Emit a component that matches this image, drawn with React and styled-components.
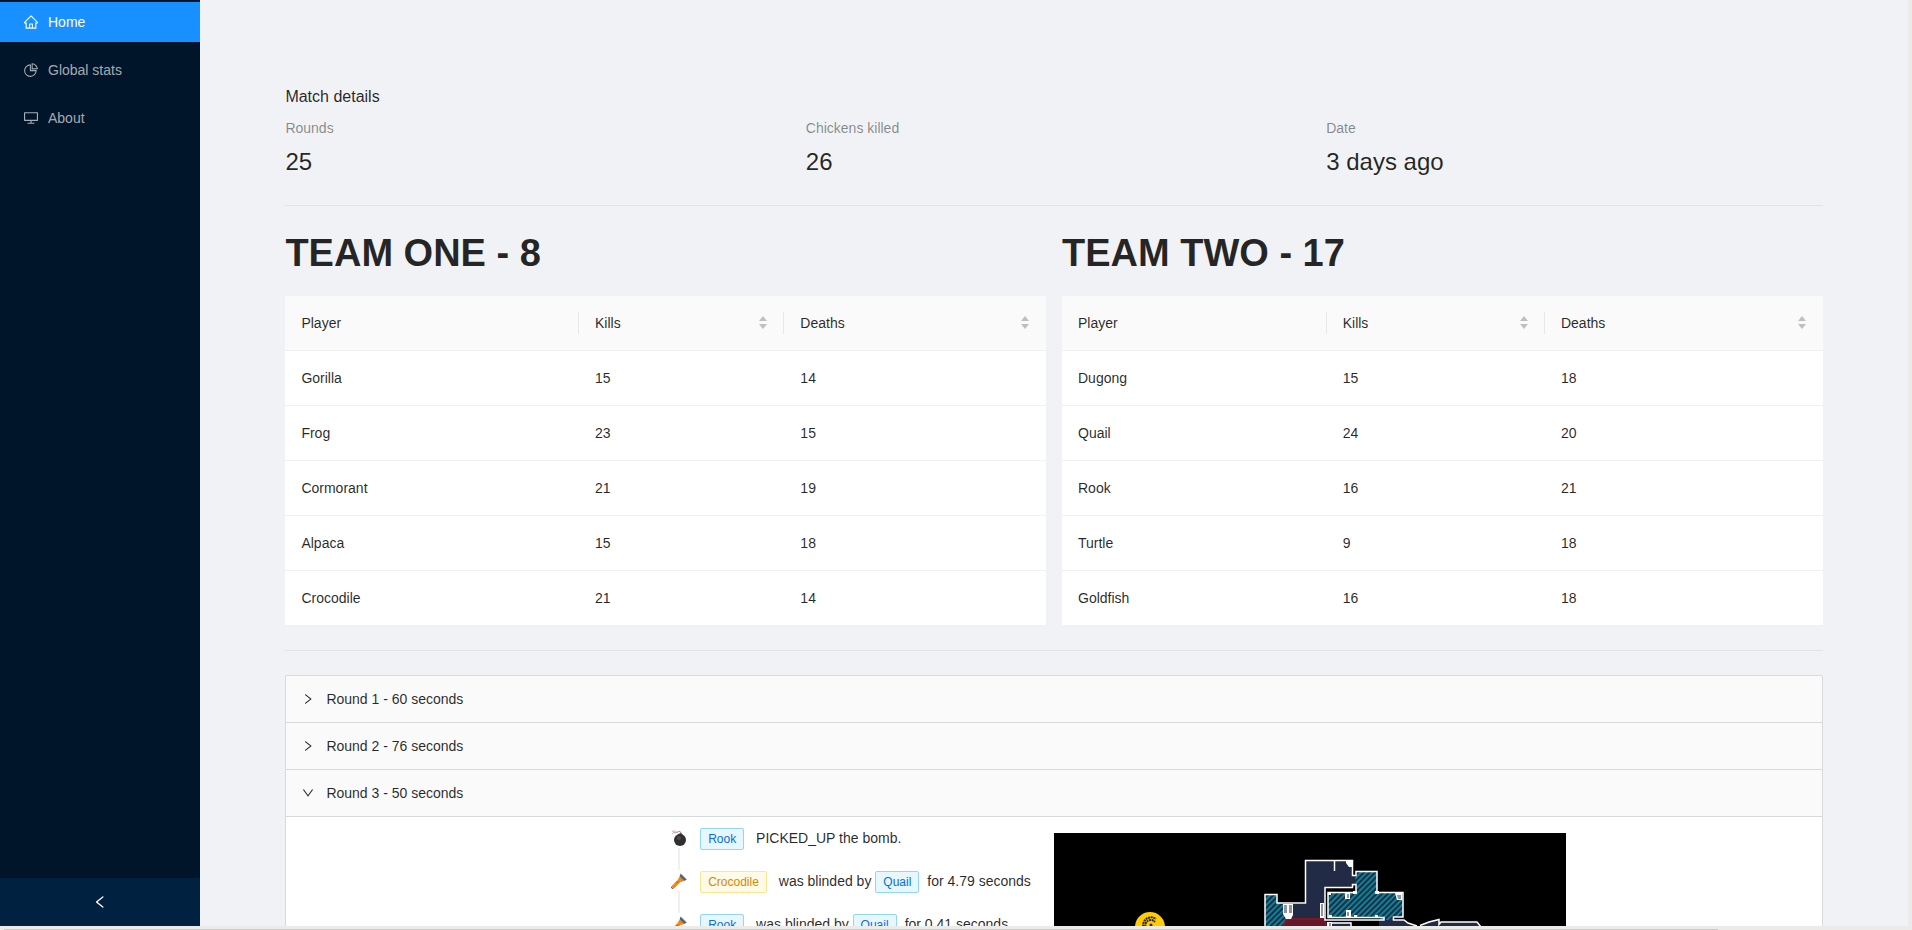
// Import necessary libraries
import React, { useState } from 'react';
import styled, { createGlobalStyle } from 'styled-components';
import { AiOutlineHome, AiOutlinePieChart, AiOutlineDesktop, AiOutlineLeft, AiOutlineRight, AiOutlineDown } from 'react-icons/ai';

const textColor = 'rgba(0, 0, 0, 0.85)';
const mutedColor = 'rgba(0, 0, 0, 0.45)';
const lineColor = '#f0f0f0';
const panelBorder = '#d9d9d9';

// Trims the empty margin that the icons carry in their own view box
const iconBox = '64 64 896 896';

const GlobalStyle = createGlobalStyle`
    * {
        box-sizing: border-box;
    }

    body {
        margin: 0;
        color: ${textColor};
        background: #f0f2f5;
        font-family: "Liberation Sans", Arial, sans-serif;
        font-size: 14px;
        line-height: 22px;
    }
`;

const Window = styled.div`
    display: grid;
    grid-template-columns: minmax(0, 1fr) 4px;
    grid-template-rows: minmax(0, 1fr) 4px;
    height: 100vh;
    background: #edebea;
`;

const Layout = styled.div`
    display: flex;
    overflow: hidden;
    background: #f0f2f5;
`;

const ScrollTrack = styled.div`
    grid-row: 2;
    display: flex;
    align-items: flex-end;
    padding-left: 4px;
`;

const ScrollThumb = styled.div`
    width: 90%;
    height: 1px;
    background: #cdcbca;
`;

const Sidebar = styled.aside`
    display: flex;
    flex-direction: column;
    flex: 0 0 200px;
    background: #001529;
`;

const Menu = styled.nav`
    display: flex;
    flex-direction: column;
    gap: 8px;
    flex: 1;
    padding-top: 2px;
`;

const MenuLink = styled.a`
    display: flex;
    align-items: center;
    gap: 10px;
    height: 40px;
    padding: 0 24px;
    color: ${(props) => (props.$active ? '#fff' : 'rgba(255, 255, 255, 0.65)')};
    background: ${(props) => (props.$active ? '#1890ff' : 'transparent')};
    text-decoration: none;
`;

const CollapseButton = styled.button`
    display: flex;
    align-items: center;
    justify-content: center;
    height: 48px;
    border: 0;
    color: #fff;
    background: #002140;
    cursor: pointer;
`;

const Content = styled.main`
    flex: 1;
    min-width: 0;
`;

const Page = styled.div`
    padding: 84px 5% 0;
`;

const DetailsTitle = styled.h2`
    margin: 0 0 8px;
    font-size: 16px;
    font-weight: 400;
    line-height: 25px;
`;

const Stats = styled.dl`
    display: grid;
    grid-template-columns: repeat(3, 1fr);
    gap: 24px;
    margin: 0 -12px;
    padding: 0 12px;
`;

const StatLabel = styled.dt`
    margin-bottom: 4px;
    color: ${mutedColor};
`;

const StatValue = styled.dd`
    margin: 0;
    font-size: 24px;
    line-height: 38px;
`;

const Divider = styled.hr`
    height: 1px;
    margin: 24px 0;
    border: 0;
    background: rgba(0, 0, 0, 0.06);
`;

const Teams = styled.div`
    display: grid;
    grid-template-columns: 1fr 1fr;
    gap: 16px;
`;

const TeamTitle = styled.h1`
    margin: 0 0 19px;
    font-size: 38px;
    font-weight: 700;
    line-height: 47px;
`;

const Table = styled.table`
    width: 100%;
    border-spacing: 0;
    table-layout: fixed;
    background: #fff;
`;

const HeadCell = styled.th`
    width: ${(props) => props.$width};
    height: 55px;
    padding: 0;
    border-bottom: 1px solid ${lineColor};
    background: #fafafa;
    font-weight: 400;
    text-align: left;
`;

const HeadLabel = styled.div`
    display: flex;
    align-items: center;
    height: 22px;
    padding: 0 16px;
    border-right: 1px solid ${(props) => (props.$last ? 'transparent' : '#e8e8e8')};
`;

const SortButton = styled.button`
    display: flex;
    align-items: center;
    justify-content: space-between;
    width: 100%;
    padding: 0;
    border: 0;
    color: inherit;
    background: none;
    font: inherit;
    cursor: pointer;
`;

const Cell = styled.td`
    height: 55px;
    padding: 0 16px;
    border-bottom: 1px solid ${lineColor};
`;

const Rounds = styled.div`
    border: 1px solid ${panelBorder};
    border-radius: 2px;
    background: #fafafa;
`;

const RoundHeader = styled.button`
    display: flex;
    align-items: center;
    gap: 12px;
    width: 100%;
    height: 47px;
    padding: 0 16px;
    border: 0;
    border-bottom: 1px solid ${panelBorder};
    color: inherit;
    background: none;
    font: inherit;
    cursor: pointer;

    svg {
        font-size: 12px;
    }
`;

const RoundBody = styled.div`
    display: grid;
    grid-template-columns: 1fr 1fr 2fr;
    padding: 0 8px;
    background: #fff;
`;

const Timeline = styled.ul`
    grid-column: 2;
    margin: 0;
    padding: 10px 0 0;
    list-style: none;
    white-space: nowrap;
`;

const Event = styled.li`
    display: flex;
    gap: 16px;
    height: 43px;
`;

const EventMark = styled.div`
    display: flex;
    flex-direction: column;
    align-items: center;
    width: 10px;

    svg {
        flex: none;
        margin-top: 3px;
    }

    &::after {
        content: '';
        flex: 1;
        width: 2px;
        margin-top: 2px;
        background: ${lineColor};
    }
`;

const tagColors = {
    blue: ['#096dd9', '#e6f7ff', '#91d5ff'],
    gold: ['#d48806', '#fffbe6', '#ffe58f'],
};

const Tag = styled.span`
    display: inline-block;
    margin-right: 8px;
    padding: 0 7px;
    border: 1px solid ${(props) => tagColors[props.$color][2]};
    border-radius: 2px;
    color: ${(props) => tagColors[props.$color][0]};
    background: ${(props) => tagColors[props.$color][1]};
    font-size: 12px;
    line-height: 20px;
`;

const Radar = styled.div`
    width: 512px;
    max-width: 100%;
    margin-top: 16px;
    background: #000;

    svg {
        display: block;
        width: 100%;
    }
`;

const teams = [
    {
        title: 'TEAM ONE - 8',
        widths: ['38.6%', '27%', 'auto'],
        players: [['Gorilla', 15, 14], ['Frog', 23, 15], ['Cormorant', 21, 19], ['Alpaca', 15, 18], ['Crocodile', 21, 14]],
    },
    {
        title: 'TEAM TWO - 17',
        widths: ['34.8%', '28.7%', 'auto'],
        players: [['Dugong', 15, 18], ['Quail', 24, 20], ['Rook', 16, 21], ['Turtle', 9, 18], ['Goldfish', 16, 18]],
    },
];

const SortIcon = () => (
    <svg width="8" height="14" viewBox="0 0 8 14" fill="#bfbfbf" aria-hidden="true">
        <path d="M4 0 8 5H0zM4 13 0 8h8z" />
    </svg>
);

const BombIcon = () => (
    <svg width="16" height="16" viewBox="0 0 16 16" aria-hidden="true">
        <path d="M3 3C5 1 6 3 7 2s3-1 3 2" fill="none" stroke="#777" />
        <path d="m1 1 3 2M1 4l2-2M3 0v3" stroke="#f4a79d" />
        <path d="m7 4 3-1 2 2-2 2H7z" fill="#444" />
        <circle cx="9" cy="10" r="6" fill="#303030" />
        <circle cx="8" cy="8" r="2" fill="#4c4c4c" />
    </svg>
);

const FlashlightIcon = () => (
    <svg width="16" height="16" viewBox="0 0 16 16" aria-hidden="true">
        <path d="M1.5 14.5 9 7" stroke="#f5820f" strokeWidth="3.4" />
        <path d="m1.5 13 7-7" stroke="#ffa63a" strokeWidth="1" />
        <path d="m.2 13.6 2.2 2.2-1 .2L0 14.7z" fill="#4c4c4c" />
        <path d="M9 3.2 13.2 7.4 10.5 9 7.2 5.7z" fill="#f5820f" />
        <path d="M9.5.8 15.6 6.6 13.4 8 8.6 3.2z" fill="#4e6570" />
        <path d="M9.8.8 15.6 6.4" stroke="#90a4ae" />
        <path d="m5.5 10 1.5-1.5" stroke="#9c5313" />
    </svg>
);

const RadarMap = () => (
    <svg viewBox="0 0 512 512" role="img" aria-label="Radar">
        <defs>
            <pattern id="hatch" width="4" height="4" patternUnits="userSpaceOnUse" patternTransform="rotate(45)">
                <rect width="4" height="4" fill="#222b45" />
                <rect width="2" height="4" fill="#078495" />
            </pattern>
        </defs>
        <path d="M251.500 71V27.500H298.500V42L302 43V52L299 54H271V89H297V130H215V71z" fill="#222b45" />
        <path d="M211 130V61H223V70H228L233 84 229 96V130z" fill="url(#hatch)" />
        <path d="M301 43 302.500 38.500H323V59.500H349V84H339.500V87H326V84H274V59.500H302z" fill="url(#hatch)" />
        <path d="M325 130V87H350L354 90 363 93V130z" fill="#222b45" />
        <path d="M366 130V92L375 89 385 86V91L387 89H423L427 96V130z" fill="#222b45" />
        <path d="m229 95 2-8 2-2h37l2 4v41h-44z" fill="#641827" />
        <path d="m229 94 4-8h36l3 6" fill="none" stroke="#95152e" />
        <g fill="none" stroke="#fff" strokeWidth="1.500">
            <path d="M211 130V61.500H223V70H251.500V27.500H298.500V42.500H302V38.500H323V59.500H349V84H339.500V87H350L354 90 363 93" />
            <path d="M366 92.500 375 89 385 86.500V91.500L387 89H423L427 94" />
            <path d="M302 59.500H274V84.500H330V87H271V54.500H298.500V51.500H302V59.500M280.500 28V38" />
            <path d="M273 90H297V130" />
        </g>
        <path d="M292 28h6v6h-3l-3-4zM229 71h10v11l-2 4h-5l-3-5zM266 70h4v15h-4zM273 89h5v7h-5z" fill="#fff" />
        <path d="M230 72h3v8h-3zM235 72h3v8h-3zM267 71h2v12h-2zM275 90h2v6h-2z" fill="#8f94a0" />
        <path d="M291 60h5v6h-5zM292 77h5v7h-5zM341 60h7v7h-5zM299 58h4v3h-4zM321 58h4v3h-4zM274 60h3v2h-3zM275 82h3v2h-3zM300 82h3v2h-3zM321 82h3v2h-3z" fill="#fff" />
        <path d="M293 61h2v4h-2zM293 79h2v4h-2zM343 62h4v4h-3z" fill="#8f94a0" />
        <circle cx="96" cy="94" r="15" fill="#ffcc05" />
        <g fill="none" stroke="#302800" strokeWidth="2" strokeDasharray="2 0.600">
            <path d="M90 96A8 8 0 0 1 102 86" />
            <path d="M92.500 96A5 5 0 0 1 101 89" />
        </g>
        <circle cx="97" cy="92" r="1.500" fill="#302800" />
    </svg>
);

const TeamTable = ({ team }) => (
    <section>
        <TeamTitle>{team.title}</TeamTitle>
        <Table>
            <thead>
                <tr>
                    <HeadCell $width={team.widths[0]}><HeadLabel>Player</HeadLabel></HeadCell>
                    <HeadCell $width={team.widths[1]}>
                        <HeadLabel><SortButton>Kills<SortIcon /></SortButton></HeadLabel>
                    </HeadCell>
                    <HeadCell $width={team.widths[2]}>
                        <HeadLabel $last><SortButton>Deaths<SortIcon /></SortButton></HeadLabel>
                    </HeadCell>
                </tr>
            </thead>
            <tbody>
                {team.players.map(([name, kills, deaths]) => (
                    <tr key={name}>
                        <Cell>{name}</Cell>
                        <Cell>{kills}</Cell>
                        <Cell>{deaths}</Cell>
                    </tr>
                ))}
            </tbody>
        </Table>
    </section>
);

const BlindEvent = ({ player, color, by, seconds }) => (
    <Event>
        <EventMark><FlashlightIcon /></EventMark>
        <div>
            <Tag $color={color}>{player}</Tag> was blinded by <Tag $color="blue">{by}</Tag>for {seconds} seconds
        </div>
    </Event>
);

const RoundContent = () => (
    <RoundBody>
        <Timeline>
            <Event>
                <EventMark><BombIcon /></EventMark>
                <div><Tag $color="blue">Rook</Tag> PICKED_UP the bomb.</div>
            </Event>
            <BlindEvent player="Crocodile" color="gold" by="Quail" seconds="4.79" />
            <BlindEvent player="Rook" color="blue" by="Quail" seconds="0.41" />
        </Timeline>
        <Radar><RadarMap /></Radar>
    </RoundBody>
);

const rounds = ['Round 1 - 60 seconds', 'Round 2 - 76 seconds', 'Round 3 - 50 seconds'];

const App = () => {
    const [openRound, setOpenRound] = useState(2);

    return (
        <Window>
            <GlobalStyle />
            <Layout>
                <Sidebar>
                    <Menu>
                        <MenuLink href="#home" $active><AiOutlineHome viewBox={iconBox} />Home</MenuLink>
                        <MenuLink href="#stats"><AiOutlinePieChart viewBox={iconBox} />Global stats</MenuLink>
                        <MenuLink href="#about"><AiOutlineDesktop viewBox={iconBox} />About</MenuLink>
                    </Menu>
                    <CollapseButton aria-label="Collapse menu"><AiOutlineLeft size={14} viewBox={iconBox} /></CollapseButton>
                </Sidebar>
                <Content>
                    <Page>
                        <DetailsTitle>Match details</DetailsTitle>
                        <Stats>
                            <div><StatLabel>Rounds</StatLabel><StatValue>25</StatValue></div>
                            <div><StatLabel>Chickens killed</StatLabel><StatValue>26</StatValue></div>
                            <div><StatLabel>Date</StatLabel><StatValue>3 days ago</StatValue></div>
                        </Stats>
                        <Divider />
                        <Teams>
                            {teams.map((team) => <TeamTable key={team.title} team={team} />)}
                        </Teams>
                        <Divider />
                        <Rounds>
                            {rounds.map((title, index) => (
                                <div key={title}>
                                    <RoundHeader
                                        aria-expanded={openRound === index}
                                        onClick={() => setOpenRound(openRound === index ? -1 : index)}
                                    >
                                        {openRound === index ? <AiOutlineDown viewBox={iconBox} /> : <AiOutlineRight viewBox={iconBox} />}
                                        {title}
                                    </RoundHeader>
                                    {openRound === index && <RoundContent />}
                                </div>
                            ))}
                        </Rounds>
                    </Page>
                </Content>
            </Layout>
            <ScrollTrack><ScrollThumb /></ScrollTrack>
        </Window>
    );
};

export default App;
